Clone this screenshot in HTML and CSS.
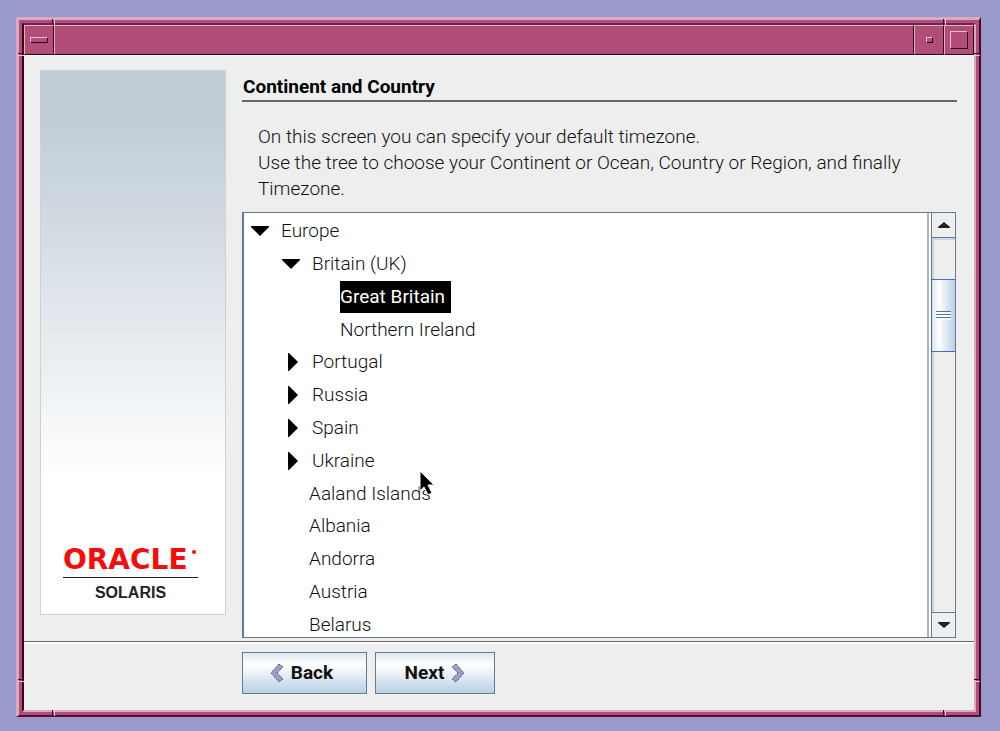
FILE: index.html
```html
<!DOCTYPE html>
<html lang="en">
<head>
<meta charset="utf-8">
<title>Continent and Country</title>
<link rel="stylesheet" href="styles.css">
</head>
<body>
<div class="window">
  <span class="notch notch-v top left"></span>
  <span class="notch notch-v top right"></span>
  <span class="notch notch-v bottom left"></span>
  <span class="notch notch-v bottom right"></span>
  <span class="notch notch-h upper west"></span>
  <span class="notch notch-h upper east"></span>
  <span class="notch notch-h lower west"></span>
  <span class="notch notch-h lower east"></span>
  <div class="frame">
    <header class="titlebar">
      <button class="tb-button" type="button" aria-label="Window menu"><span class="glyph glyph-menu"></span></button>
      <div class="tb-title"></div>
      <button class="tb-button" type="button" aria-label="Minimize"><span class="glyph glyph-min"></span></button>
      <button class="tb-button" type="button" aria-label="Maximize"><span class="glyph glyph-max"></span></button>
    </header>
    <div class="content">
      <aside class="sidebar">
        <div class="brand">
          <div class="oracle">ORACLE<span class="mark"></span></div>
          <div class="solaris">SOLARIS</div>
        </div>
      </aside>
      <main class="panel">
        <h1 class="heading">Continent and Country</h1>
        <p class="intro">On this screen you can specify your default timezone.<br>Use the tree to choose your Continent or Ocean, Country or Region, and finally Timezone.</p>
        <div class="listbox">
          <ul class="tree" role="tree" aria-label="Timezone regions">
            <li class="row level-1" role="treeitem" aria-expanded="true"><button class="toggle" type="button" aria-label="Collapse Europe"><svg class="arrow" viewBox="0 0 18 18"><path d="M0 4h18v1l-9 9-9-9z"/></svg></button><span>Europe</span></li>
            <li class="row level-2" role="treeitem" aria-expanded="true"><button class="toggle" type="button" aria-label="Collapse Britain"><svg class="arrow" viewBox="0 0 18 18"><path d="M0 4h18v1l-9 9-9-9z"/></svg></button><span>Britain (UK)</span></li>
            <li class="row level-3" role="treeitem" aria-selected="true"><span class="selected">Great Britain</span></li>
            <li class="row level-3" role="treeitem"><span>Northern Ireland</span></li>
            <li class="row level-2" role="treeitem" aria-expanded="false"><button class="toggle" type="button" aria-label="Expand Portugal"><svg class="arrow" viewBox="0 0 18 18"><path d="M6 0h1l9 9-9 9h-1z"/></svg></button><span>Portugal</span></li>
            <li class="row level-2" role="treeitem" aria-expanded="false"><button class="toggle" type="button" aria-label="Expand Russia"><svg class="arrow" viewBox="0 0 18 18"><path d="M6 0h1l9 9-9 9h-1z"/></svg></button><span>Russia</span></li>
            <li class="row level-2" role="treeitem" aria-expanded="false"><button class="toggle" type="button" aria-label="Expand Spain"><svg class="arrow" viewBox="0 0 18 18"><path d="M6 0h1l9 9-9 9h-1z"/></svg></button><span>Spain</span></li>
            <li class="row level-2" role="treeitem" aria-expanded="false"><button class="toggle" type="button" aria-label="Expand Ukraine"><svg class="arrow" viewBox="0 0 18 18"><path d="M6 0h1l9 9-9 9h-1z"/></svg></button><span>Ukraine</span></li>
            <li class="row leaf" role="treeitem"><span>Aaland Islands</span></li>
            <li class="row leaf" role="treeitem"><span>Albania</span></li>
            <li class="row leaf" role="treeitem"><span>Andorra</span></li>
            <li class="row leaf" role="treeitem"><span>Austria</span></li>
            <li class="row leaf" role="treeitem"><span>Belarus</span></li>
          </ul>
          <div class="scrollbar">
            <button class="step step-up" type="button" aria-label="Scroll up"><svg class="step-arrow" viewBox="0 0 12 6"><path d="M6 0l6 5v1H0V5z"/></svg></button>
            <div class="track"><div class="thumb"><span class="grip"></span></div></div>
            <button class="step step-down" type="button" aria-label="Scroll down"><svg class="step-arrow" viewBox="0 0 12 6"><path d="M6 6L0 1V0h12v1z"/></svg></button>
          </div>
        </div>
      </main>
    </div>
    <footer class="actions">
      <button class="action back" type="button"><svg class="chevron" viewBox="0 0 14 20"><path d="M9 1l4 3-6 6 6 6-4 3-8-9z"/></svg>Back</button>
      <button class="action next" type="button">Next<svg class="chevron" viewBox="0 0 14 20"><path d="M5 1L1 4l6 6-6 6 4 3 8-9z"/></svg></button>
    </footer>
  </div>
</div>
<svg class="pointer" viewBox="0 0 16 26"><path d="M1 1v20l4-4 4 8 4-2-4-8h6z"/></svg>
</body>
</html>
```
FILE: styles.css
```css
* { box-sizing: border-box; }
body {
  margin: 0;
  height: 100vh;
  padding: 17px 19px 14px 16px;
  background: #9999cb;
  color: #111;
  font: 300 19px/26px Roboto, "Liberation Sans", sans-serif;
}
button { margin: 0; padding: 0; border: 0; background: none; font: inherit; color: inherit; }

/* Motif-style window frame */
.window {
  position: relative;
  height: 100%;
  padding: 3px;
  border: 3px solid;
  border-color: #dba9c2 #45081f #54102f #dba9c2;
  border-right-width: 2px;
  border-bottom-width: 2px;
  background: #b24d7a;
}
.frame {
  height: 100%;
  display: flex;
  flex-direction: column;
  border: 2px solid;
  border-color: #6a2849 #dba9c2 #dba9c2 #3a0618;
  background: #eee;
}
.notch { position: absolute; z-index: 1; }
.notch-v { width: 3px; height: 6px; border-left: 1px solid #3a0618; border-right: 1px solid #e6bfd0; }
.notch-h { width: 6px; height: 3px; border-top: 1px solid #3a0618; border-bottom: 1px solid #e6bfd0; }
.notch.top { top: -1px; }
.notch.bottom { bottom: -1px; }
.notch.left { left: 33px; }
.notch.right { right: 33px; }
.notch.west { left: -1px; }
.notch.east { right: -1px; }
.notch.upper { top: 33px; }
.notch.lower { bottom: 33px; }

.titlebar { flex: none; height: 30px; display: flex; background: #b24d7a; }
.tb-button, .tb-title {
  border: 1px solid;
  border-color: #e0b0c6 #2a0411 #2a0411 #e0b0c6;
}
.tb-title { flex: 1; }
.tb-button { width: 30px; display: flex; align-items: center; justify-content: center; }
.glyph { border: 1px solid; border-color: #e6bfd0 #2a0411 #2a0411 #e6bfd0; }
.glyph-menu { width: 18px; height: 6px; }
.glyph-min { width: 7px; height: 6px; }
.glyph-max { width: 18px; height: 18px; }

.content { flex: 1; min-height: 0; display: flex; gap: 16px; padding: 14px 17px 3px 16px; border-top: 1px solid #fff; }
.sidebar {
  width: 186px;
  margin-bottom: 23px;
  padding: 0 27px 11px 22px;
  border: 1px solid #d0d0d0;
  background: linear-gradient(#c1cdd7 0, #c1cdd7 10%, #fff 75%);
  display: flex;
  align-items: flex-end;
}
.brand { flex: 1; min-width: 0; }
.oracle {
  display: flex;
  border-bottom: 1px solid #222;
  color: #f80b0b;
  font: 700 28px/34px "DejaVu Sans", sans-serif;
}
.mark { flex: none; width: 4px; height: 4px; margin: 7px 0 0 4px; border-radius: 50%; background: #f80b0b; }
.solaris { padding-top: 5px; text-align: center; color: #222; font: 700 16px/20px "Liberation Sans", sans-serif; }

.panel { flex: 1; min-width: 0; display: flex; flex-direction: column; }
.heading { margin: 0; padding: 4px 1px 0; border-bottom: 2px solid #666; font-size: 19px; line-height: 26px; font-weight: 700; color: #000; }
.intro { margin: 0; padding: 22px 16px 10px; }
.listbox { flex: 1; min-height: 0; display: flex; border: 2px solid #647b91; border-top-width: 1px; border-right-width: 1px; border-bottom-width: 1px; margin-right: 1px; background: #fff; overflow: hidden; }
.tree { flex: 1; margin: 0 0 -4px; padding: 2px 0 0; list-style: none; display: flex; flex-direction: column; }
.row { flex: 1; min-height: 0; display: flex; align-items: center; }
.level-1 { padding-left: 7px; }
.level-2 { padding-left: 38px; }
.level-3 { padding-left: 96px; }
.leaf { padding-left: 65px; }
.toggle { width: 30px; height: 18px; display: flex; }
.arrow { width: 18px; height: 18px; fill: #000; }
.selected { padding: 3px 6px 3px 0; background: #000; color: #fff; font-weight: 400; }

.scrollbar { width: 28px; display: flex; flex-direction: column; border-left: 2px solid #b5b5b5; padding-left: 2px; background: #fff; }
.step { flex: none; height: 25px; display: flex; align-items: center; justify-content: center; background: #eee; border-left: 1px solid #647b91; }
.step-up { border-bottom: 1px solid #647b91; }
.step-down { border-top: 1px solid #647b91; }
.step-arrow { width: 12px; height: 6px; fill: #222; }
.track { flex: 1; padding-top: 41px; background: #eee; border-left: 1px solid #647b91; box-shadow: inset 2px 2px #c6d8e9; }
.thumb {
  height: 22%;
  margin-left: -1px;
  display: flex;
  align-items: center;
  justify-content: center;
  border: 1px solid #4169bd;
  border-right: 0;
  background: linear-gradient(90deg, #d5e3f0, #fff 30%, #b8cfe5);
}
.grip { width: 15px; height: 9px; background: repeating-linear-gradient(#5272b8 0 1px, #fff 1px 3px); }

.actions { flex: none; height: 69px; display: flex; align-items: flex-start; gap: 8px; padding: 10px 16px 0 218px; border-top: 1px solid #666; box-shadow: inset 0 2px #fff; }
.action {
  height: 42px;
  display: flex;
  align-items: center;
  justify-content: center;
  gap: 7px;
  border: 1px solid #647b91;
  background: linear-gradient(#dde8f3, #fff 30%, #b8cfe5);
  font-weight: 700;
}
.back { width: 125px; padding-right: 6px; }
.next { width: 120px; }
.chevron { width: 14px; height: 20px; fill: #9c9ccf; stroke: #333; stroke-width: 1; stroke-dasharray: 1 1; }

.pointer { position: absolute; left: 419px; top: 470px; width: 16px; height: 26px; fill: #000; stroke: #fff; stroke-width: 1; }
```
